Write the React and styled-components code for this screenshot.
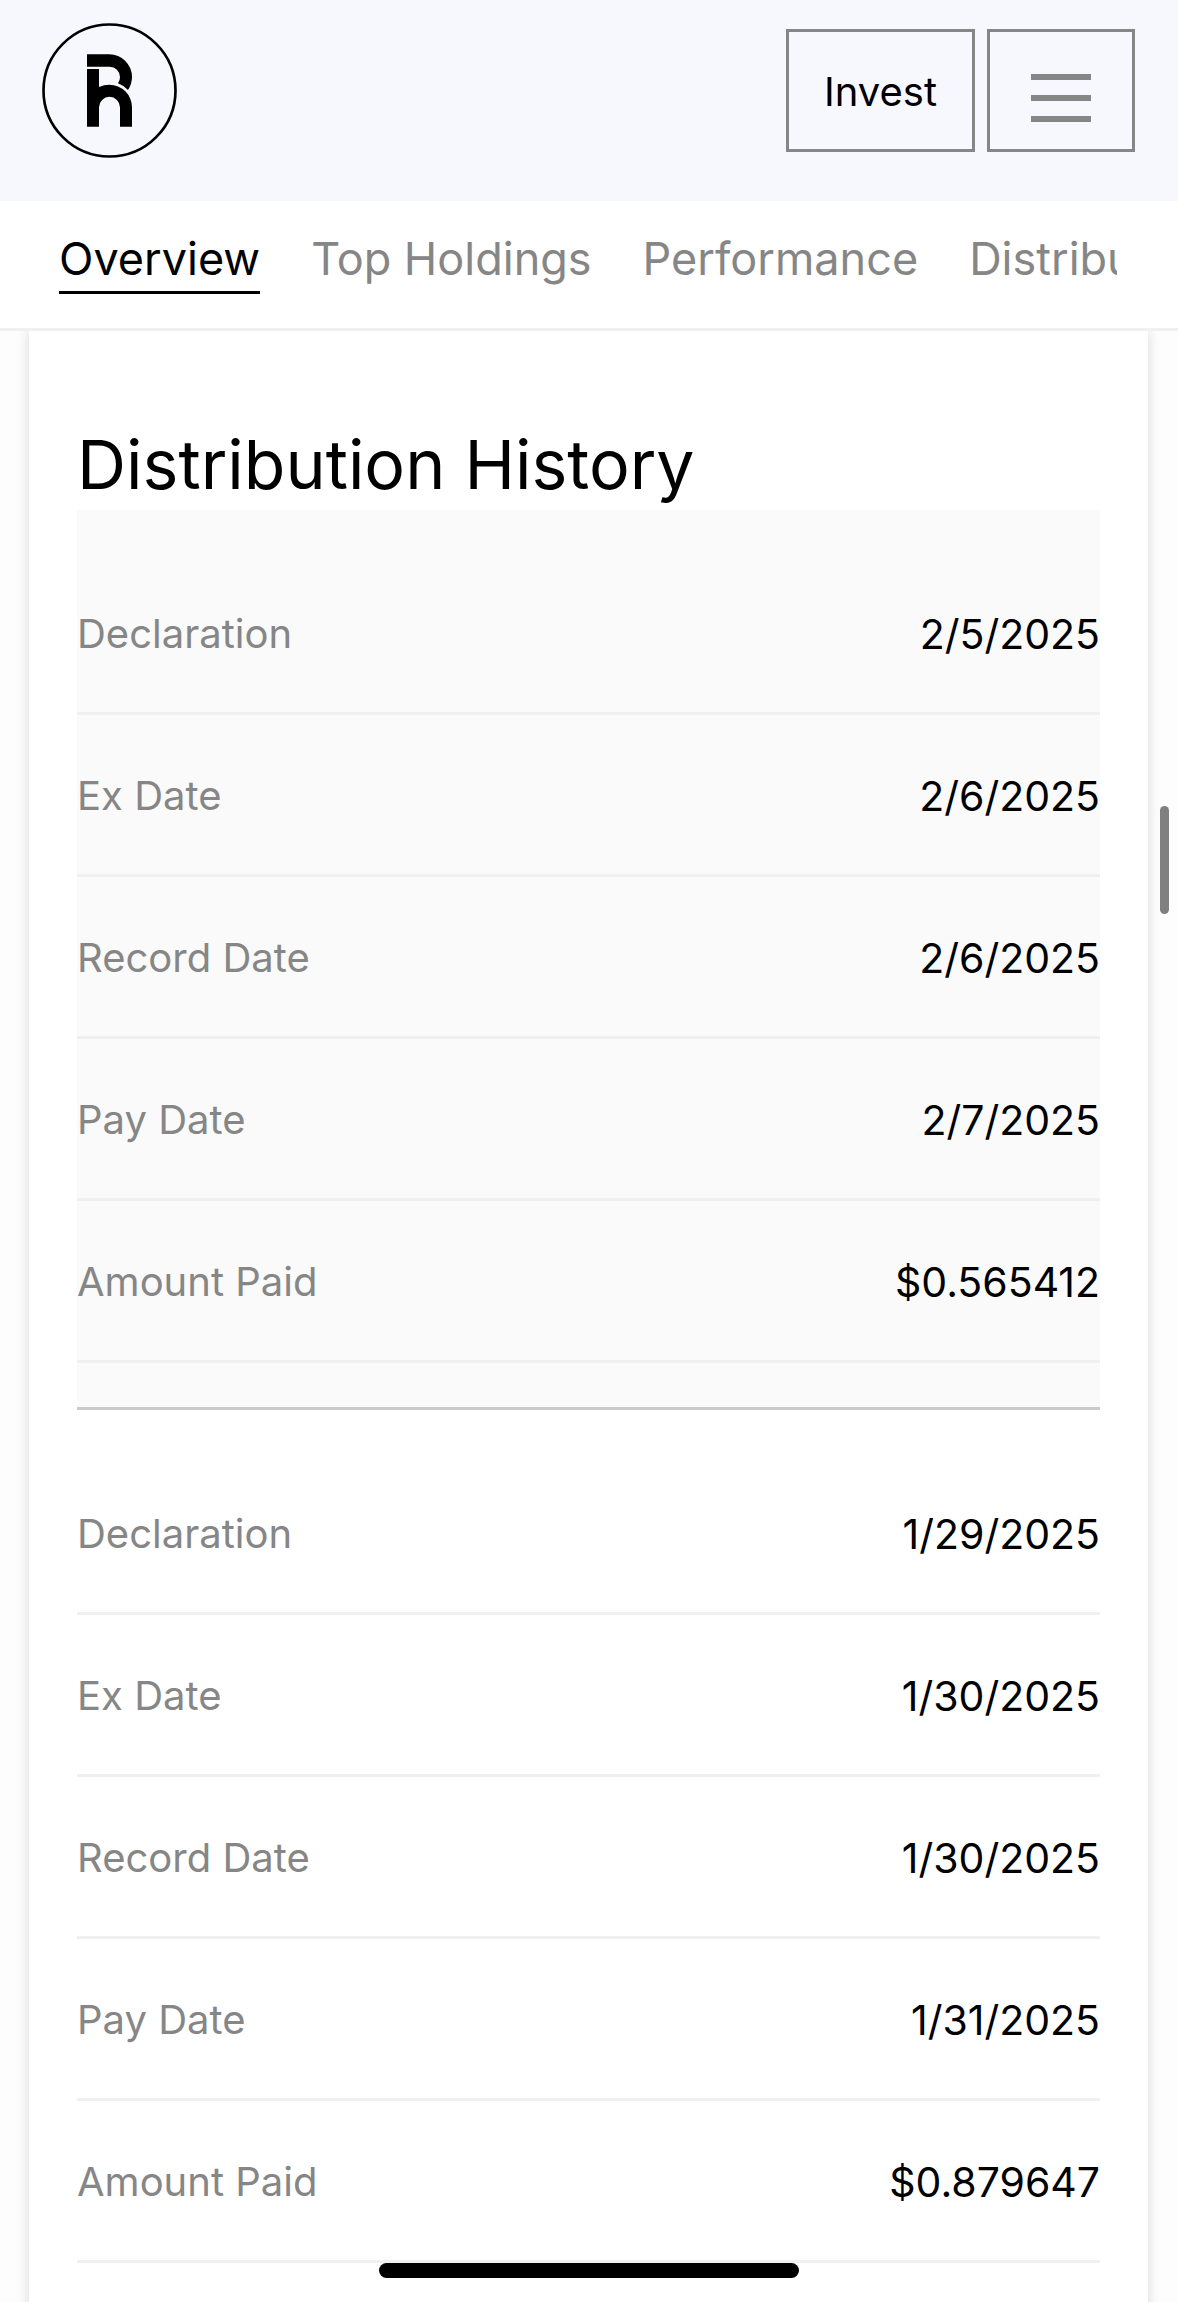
import React from "react";
import styled, { createGlobalStyle } from "styled-components";

const GlobalStyle = createGlobalStyle`
  * {
    box-sizing: border-box;
  }

  body {
    margin: 0;
    background: #fdfdfd;
    color: #000;
    font-family: Inter, "Liberation Sans", sans-serif;
  }
`;

const Page = styled.div`
  position: relative;
  display: flex;
  flex-direction: column;
  height: 100vh;
  overflow: hidden;
`;

const Header = styled.header`
  display: flex;
  flex-shrink: 0;
  align-items: center;
  justify-content: space-between;
  padding: 23px 43px 43px 42px;
  background: #f7f8fe;
`;

const LogoLink = styled.a`
  display: block;
  color: #000;

  & svg {
    display: block;
    width: 135px;
    height: 135px;
  }
`;

const Actions = styled.div`
  display: flex;
  gap: 12px;
`;

const HeaderButton = styled.button`
  display: flex;
  align-items: center;
  justify-content: center;
  height: 123px;
  padding: 2px 35px 0;
  border: 3px solid #868686;
  background: transparent;
  color: #000;
  font-family: inherit;
  font-size: 40px;
`;

const MenuButton = styled(HeaderButton)`
  flex-direction: column;
  gap: 15px;
  padding: 15px 41px 0;
`;

const MenuBar = styled.span`
  width: 60px;
  height: 6px;
  background: #868686;
`;

const TabBar = styled.nav`
  flex-shrink: 0;
  padding: 28px 61px 34px 59px;
  background: #fff;
  border-bottom: 3px solid #f0f0f0;
`;

const TabList = styled.div`
  display: flex;
  gap: 51px;
  overflow: hidden;
`;

const Tab = styled.a`
  flex-shrink: 0;
  padding-bottom: 2px;
  border-bottom: 3px solid ${props => (props.$active ? "#000" : "transparent")};
  color: ${props => (props.$active ? "#000" : "#868686")};
  font-size: 45px;
  line-height: 60px;
  text-decoration: none;
  white-space: nowrap;
`;

const Content = styled.main`
  flex: 1;
  min-height: 0;
  padding: 0 30px 0 29px;
  overflow: hidden;
`;

const Card = styled.section`
  padding: 93px 48px 48px;
  background: #fff;
  box-shadow: 0 0 12px rgba(0, 0, 0, 0.15);
`;

const Title = styled.h2`
  margin: 0 0 6px;
  font-size: 68px;
  font-weight: 400;
  line-height: 80px;
`;

const RecordTable = styled.table`
  width: 100%;
  border-spacing: 0;
  line-height: 54px;
`;

const Record = styled.div`
  padding: 43px 0 44px;
  border-bottom: 3px solid #cacaca;

  &:nth-of-type(odd) {
    background: #fafafa;
  }
`;

const Label = styled.th`
  height: 162px;
  padding: 3px 0 0;
  border-bottom: 3px solid #f0f0f0;
  color: #868686;
  font-size: 40px;
  font-weight: 400;
  text-align: left;
`;

const Value = styled.td`
  padding: 3px 0 0;
  border-bottom: 3px solid #f0f0f0;
  font-size: 41px;
  text-align: right;
`;

const ScrollThumb = styled.div`
  position: absolute;
  top: 35%;
  right: 9px;
  width: 9px;
  height: 108px;
  border-radius: 5px;
  background: #808080;
`;

const HomeIndicator = styled.div`
  position: absolute;
  right: 0;
  bottom: 24px;
  left: 0;
  width: 420px;
  height: 15px;
  margin: 0 auto;
  border-radius: 8px;
  background: #000;
`;

const tabs = ["Overview", "Top Holdings", "Performance", "Distributions"];

const distributions = [
  {
    Declaration: "2/5/2025",
    "Ex Date": "2/6/2025",
    "Record Date": "2/6/2025",
    "Pay Date": "2/7/2025",
    "Amount Paid": "$0.565412"
  },
  {
    Declaration: "1/29/2025",
    "Ex Date": "1/30/2025",
    "Record Date": "1/30/2025",
    "Pay Date": "1/31/2025",
    "Amount Paid": "$0.879647"
  }
];

const Logo = () => (
  <svg viewBox="126 69 405 405" fill="currentColor" aria-hidden="true">
    <circle
      cx="328.5"
      cy="271.5"
      r="198"
      fill="none"
      stroke="currentColor"
      strokeWidth="8"
    />
    <path d="M261 163H328A68 68 0 0 1 396 231Q396 252 384 270Q372 257 354 250Q360 242 360 231A31 31 0 0 0 329 200H261Z" />
    <path d="M261 207H297V261Q312 254 328 254A68 68 0 0 1 396 322V380H360V322A31 31 0 0 0 297 322V380H261Z" />
  </svg>
);

const App = () => (
  <Page>
    <GlobalStyle />
    <Header>
      <LogoLink href="#home" aria-label="Home">
        <Logo />
      </LogoLink>
      <Actions>
        <HeaderButton type="button">Invest</HeaderButton>
        <MenuButton type="button" aria-label="Menu">
          <MenuBar />
          <MenuBar />
          <MenuBar />
        </MenuButton>
      </Actions>
    </Header>

    <TabBar>
      <TabList>
        {tabs.map((tab, i) => (
          <Tab key={tab} href="#" $active={i === 0}>
            {tab}
          </Tab>
        ))}
      </TabList>
    </TabBar>

    <Content>
      <Card>
        <Title>Distribution History</Title>
        {distributions.map(item => (
          <Record key={item.Declaration}>
            <RecordTable>
              <tbody>
                {Object.entries(item).map(([label, value]) => (
                  <tr key={label}>
                    <Label scope="row">{label}</Label>
                    <Value>{value}</Value>
                  </tr>
                ))}
              </tbody>
            </RecordTable>
          </Record>
        ))}
      </Card>
    </Content>

    <ScrollThumb />
    <HomeIndicator />
  </Page>
);

export default App;
